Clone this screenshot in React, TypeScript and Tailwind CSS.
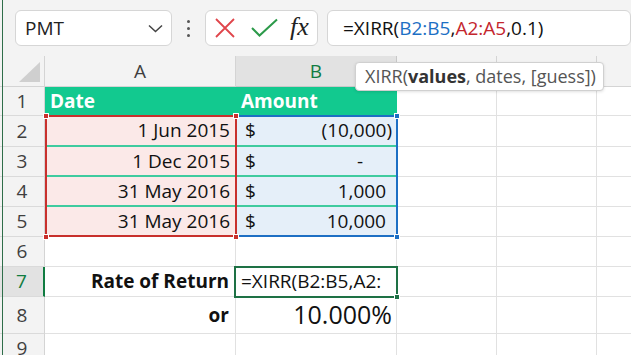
import React from "react";

type Entry = {
  date: string;
  value: string;
  h: string;
  pr: string;
  last?: boolean;
};

const entries: Entry[] = [
  { date: "1 Jun 2015", value: "(10,000)", h: "h-[31px]", pr: "pr-[4px]" },
  { date: "1 Dec 2015", value: "-", h: "h-[30px]", pr: "pr-[33px]" },
  { date: "31 May 2016", value: "1,000", h: "h-[30px]", pr: "pr-[10px]" },
  { date: "31 May 2016", value: "10,000", h: "h-[30px]", pr: "pr-[10px]", last: true },
];

function RowHead({ n, active }: { n: number; active?: boolean }) {
  return (
    <div
      className={`w-[45px] shrink-0 flex items-center justify-center text-[19px] border-b border-b-[#dadada] ${
        active
          ? "bg-[#e2e2e2] text-[#107c41] border-r-2 border-r-[#107c41]"
          : "bg-[#f3f3f3] text-[#3f3f3f] border-r border-r-[#d4d4d4]"
      }`}
    >
      {n}
    </div>
  );
}

// columns C, D, E are empty
function EmptyCells() {
  return (
    <>
      <div className="w-[100px] shrink-0 border-r border-b border-[#e1e1e1]" />
      <div className="w-[100px] shrink-0 border-r border-b border-[#e1e1e1]" />
      <div className="flex-1 border-b border-[#e1e1e1]" />
    </>
  );
}

function Handle({ className }: { className: string }) {
  return <div className={`absolute w-[6px] h-[6px] border border-white ${className}`} />;
}

export default function App() {
  return (
    <div className="relative w-[631px] h-[355px] overflow-hidden bg-white font-['Open_Sans',sans-serif] text-[#111]">
      {/* Formula bar */}
      <div className="h-[56px] bg-[#f3f3f3] flex items-center pl-[15px]">
        <div className="w-[157px] h-[36px] shrink-0 bg-white border border-[#d6d6d6] rounded-[6px] flex items-center justify-between pl-[9px] pr-[8px]">
          <span className="text-[19px] text-[#222]">PMT</span>
          <svg width="15" height="9" viewBox="0 0 15 9" fill="none">
            <path d="M1 1.5 L7.5 7.5 L14 1.5" stroke="#444" strokeWidth="1.5" />
          </svg>
        </div>
        <div className="w-[33px] shrink-0 flex flex-col items-center gap-[4px]">
          <div className="w-[3px] h-[3px] rounded-full bg-[#555]" />
          <div className="w-[3px] h-[3px] rounded-full bg-[#555]" />
          <div className="w-[3px] h-[3px] rounded-full bg-[#555]" />
        </div>
        <div className="w-[113px] h-[36px] shrink-0 bg-white border border-[#d6d6d6] rounded-[6px] flex items-center pl-[9px]">
          <svg width="20" height="20" viewBox="0 0 20 20" fill="none">
            <path d="M1 1 L19 19 M19 1 L1 19" stroke="#e0454b" strokeWidth="1.8" />
          </svg>
          <svg width="27" height="20" viewBox="0 0 27 20" fill="none" className="ml-[16px]">
            <path d="M1 10 L8.5 17.5 L26 1.5" stroke="#2c9a4a" strokeWidth="2" />
          </svg>
          <span className="ml-[12px] font-['Liberation_Serif',serif] italic text-[26px] leading-none text-[#222] -mt-[3px]">
            fx
          </span>
        </div>
        <div className="w-[304px] h-[36px] shrink-0 ml-[9px] bg-white border border-[#d6d6d6] rounded-[6px] flex items-center pl-[15px] text-[19px] whitespace-nowrap">
          <span>=XIRR(</span>
          <span className="text-[#1d6fc4]">B2:B5</span>
          <span>,</span>
          <span className="text-[#c4262e]">A2:A5</span>
          <span>,0.1)</span>
        </div>
      </div>

      {/* Column headers */}
      <div className="h-[31px] flex bg-[#f3f3f3] text-[19px] text-[#3f3f3f]">
        <div className="w-[45px] shrink-0 relative border-r border-b border-[#d4d4d4]">
          <svg width="21" height="20" viewBox="0 0 21 20" className="absolute left-[19px] top-[6px]">
            <polygon points="21,0 21,20 0,20" fill="#cfcfcf" />
          </svg>
        </div>
        <div className="w-[191px] shrink-0 flex items-center justify-center border-r border-b border-[#d4d4d4]">
          A
        </div>
        <div className="w-[161px] shrink-0 flex items-center justify-center bg-[#e2e2e2] text-[#107c41] border-r border-b border-[#c8c8c8]">
          B
        </div>
        <div className="w-[100px] shrink-0 border-r border-b border-[#d4d4d4]" />
        <div className="w-[100px] shrink-0 border-r border-b border-[#d4d4d4]" />
        <div className="flex-1 border-b border-[#d4d4d4]" />
      </div>

      {/* Grid body */}
      <div className="relative text-[19px]">
        {/* Row 1 */}
        <div className="h-[29px] flex">
          <RowHead n={1} />
          <div className="w-[352px] shrink-0 flex bg-[#12c98f] text-white font-bold">
            <div className="w-[191px] flex items-center pl-[5px]">Date</div>
            <div className="flex-1 flex items-center pl-[5px]">Amount</div>
          </div>
          <EmptyCells />
        </div>

        {/* Rows 2-5 */}
        {entries.map((e, i) => (
          <div key={i} className={`${e.h} flex`}>
            <RowHead n={i + 2} />
            <div
              className={`w-[191px] shrink-0 flex items-center justify-end pr-[6px] bg-[#fbe9e8] ${
                e.last ? "border-b border-[#e1e1e1]" : "border-b-2 border-[#3fcb9f]"
              }`}
            >
              {e.date}
            </div>
            <div
              className={`w-[161px] shrink-0 flex items-center justify-between pl-[9px] ${e.pr} bg-[#e5eff9] border-r border-r-[#e1e1e1] ${
                e.last ? "border-b border-b-[#e1e1e1]" : "border-b-2 border-b-[#3fcb9f]"
              }`}
            >
              <span>$</span>
              <span>{e.value}</span>
            </div>
            <EmptyCells />
          </div>
        ))}

        {/* Row 6 */}
        <div className="h-[30px] flex">
          <RowHead n={6} />
          <div className="w-[191px] shrink-0 border-r border-b border-[#e1e1e1]" />
          <div className="w-[161px] shrink-0 border-r border-b border-[#e1e1e1]" />
          <EmptyCells />
        </div>

        {/* Row 7 */}
        <div className="h-[30px] flex">
          <RowHead n={7} active />
          <div className="w-[191px] shrink-0 flex items-center justify-end pr-[6px] font-bold border-r border-b border-[#e1e1e1]">
            Rate of Return
          </div>
          <div className="w-[161px] shrink-0 flex items-center pl-[5px] overflow-hidden whitespace-nowrap border-r border-b border-[#e1e1e1]">
            =XIRR(B2:B5,A2:
          </div>
          <EmptyCells />
        </div>

        {/* Row 8 */}
        <div className="h-[37px] flex">
          <RowHead n={8} />
          <div className="w-[191px] shrink-0 flex items-center justify-end pr-[6px] font-bold border-r border-b border-[#e1e1e1]">
            or
          </div>
          <div className="w-[161px] shrink-0 flex items-center justify-end pr-[4px] text-[25px] border-r border-b border-[#e1e1e1]">
            10.000%
          </div>
          <EmptyCells />
        </div>

        {/* Row 9 */}
        <div className="h-[30px] flex">
          <RowHead n={9} />
          <div className="w-[191px] shrink-0 border-r border-b border-[#e1e1e1]" />
          <div className="w-[161px] shrink-0 border-r border-b border-[#e1e1e1]" />
          <EmptyCells />
        </div>

        {/* Range highlights: B2:B5 blue, A2:A5 red */}
        <div className="absolute left-[235px] top-[28px] w-[163px] h-[122px] border-2 border-[#1d6fc4]" />
        <Handle className="left-[394px] top-[26px] bg-[#1d6fc4]" />
        <Handle className="left-[394px] top-[147px] bg-[#1d6fc4]" />
        <div className="absolute left-[45px] top-[28px] w-[192px] h-[122px] border-2 border-[#c8302c]" />
        <Handle className="left-[43px] top-[26px] bg-[#c8302c]" />
        <Handle className="left-[233px] top-[26px] bg-[#c8302c]" />
        <Handle className="left-[43px] top-[147px] bg-[#c8302c]" />
        <Handle className="left-[233px] top-[147px] bg-[#c8302c]" />

        {/* Active cell B7 */}
        <div className="absolute left-[234px] top-[179px] w-[164px] h-[32px] border-2 border-[#1e7145]" />
        <div className="absolute left-[394px] top-[207px] w-[6px] h-[6px] bg-[#1e7145] border border-white" />
      </div>

      {/* Function tooltip */}
      <div className="absolute left-[355px] top-[62px] w-[249px] h-[29px] bg-white border border-[#d0d0d0] rounded-[4px] shadow-[0_1px_3px_rgba(0,0,0,0.12)] flex items-center pl-[9px] text-[18px] text-[#555] whitespace-nowrap">
        XIRR(<span className="font-bold text-[#333]">values</span>, dates, [guess])
      </div>

      {/* Window edge */}
      <div className="absolute left-[2px] top-0 w-px h-full bg-[#2f6e4a]" />
    </div>
  );
}
